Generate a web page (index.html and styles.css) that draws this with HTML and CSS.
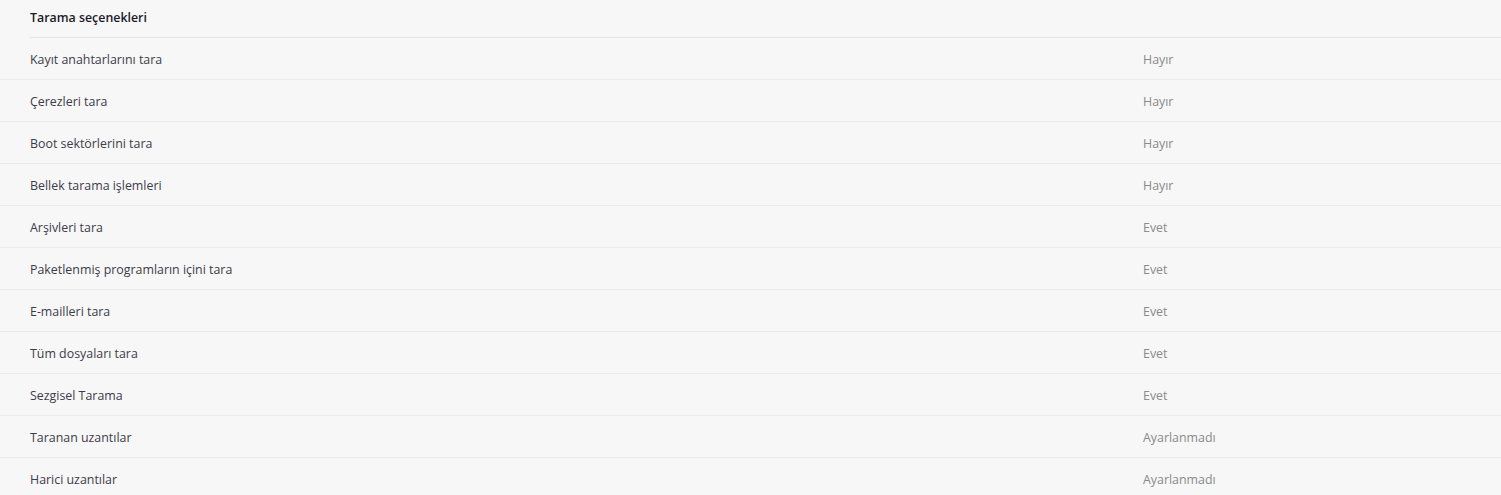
FILE: index.html
```html
<!DOCTYPE html>
<html lang="tr">
<head>
<meta charset="utf-8">
<link rel="stylesheet" href="styles.css">
</head>
<body>
<section class="panel">
  <h2 class="panel-title">Tarama seçenekleri</h2>
  <div class="row"><span class="label">Kayıt anahtarlarını tara</span><span class="value">Hayır</span></div>
  <div class="row"><span class="label">Çerezleri tara</span><span class="value">Hayır</span></div>
  <div class="row"><span class="label">Boot sektörlerini tara</span><span class="value">Hayır</span></div>
  <div class="row"><span class="label">Bellek tarama işlemleri</span><span class="value">Hayır</span></div>
  <div class="row"><span class="label">Arşivleri tara</span><span class="value">Evet</span></div>
  <div class="row"><span class="label">Paketlenmiş programların içini tara</span><span class="value">Evet</span></div>
  <div class="row"><span class="label">E-mailleri tara</span><span class="value">Evet</span></div>
  <div class="row"><span class="label">Tüm dosyaları tara</span><span class="value">Evet</span></div>
  <div class="row"><span class="label">Sezgisel Tarama</span><span class="value">Evet</span></div>
  <div class="row"><span class="label">Taranan uzantılar</span><span class="value">Ayarlanmadı</span></div>
  <div class="row"><span class="label">Harici uzantılar</span><span class="value">Ayarlanmadı</span></div>
</section>
</body>
</html>
```
FILE: styles.css
```css
html, body {
  margin: 0;
  padding: 0;
  background: #f7f7f7;
}
body {
  font-family: "Open Sans", "Noto Sans", "Liberation Sans", sans-serif;
  font-size: 12.4px;
  overflow: hidden;
}
.panel {
  display: flex;
  flex-direction: column;
}
.panel-title {
  margin: 0 0 0 30px;
  height: 37px;
  line-height: 35px;
  font-size: 12.4px;
  font-weight: 600;
  color: #1b1b2b;
  border-bottom: 1px solid #e4e4e4;
}
.row {
  box-sizing: border-box;
  display: grid;
  grid-template-columns: 1113px 1fr;
  align-items: center;
  height: 42px;
  padding: 2px 0 0 30px;
  border-bottom: 1px solid #ececec;
}
.label {
  color: #3c3c4a;
}
.value {
  color: #8a8a8a;
}
```
